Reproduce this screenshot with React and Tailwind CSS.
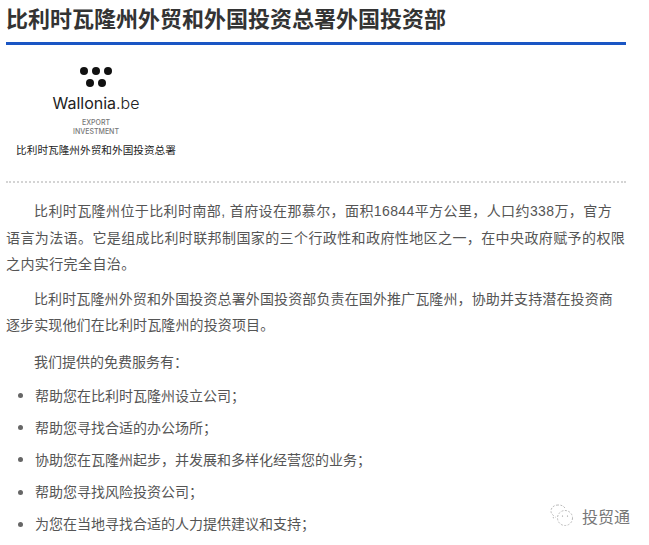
import { useState } from 'react'

const font = "font-['Liberation_Sans','Noto_Sans_CJK_SC',sans-serif]"

const services = [
  '帮助您在比利时瓦隆州设立公司；',
  '帮助您寻找合适的办公场所；',
  '协助您在瓦隆州起步，并发展和多样化经营您的业务；',
  '帮助您寻找风险投资公司；',
  '为您在当地寻找合适的人力提供建议和支持；',
]

function Logo() {
  return (
    <div className="w-[180px] h-[136px] pt-[21px] flex flex-col items-center">
      <svg width="36" height="24" viewBox="0 0 36 24">
        <circle cx="6" cy="5" r="4" fill="#111" />
        <circle cx="18" cy="5" r="4" fill="#111" />
        <circle cx="30" cy="5" r="4" fill="#111" />
        <circle cx="12" cy="17" r="4" fill="#111" />
        <circle cx="24" cy="17" r="4" fill="#111" />
      </svg>
      <div className="mt-[3px] text-[16px] leading-[20px] text-[#222] font-['Inter',sans-serif] font-normal">
        Wallonia<span className="font-light">.be</span>
      </div>
      <div className="mt-[5px] text-[7px] leading-[9px] text-center text-[#777] font-['Inter',sans-serif] font-medium">
        <div>EXPORT</div>
        <div>INVESTMENT</div>
      </div>
      <div className="mt-[7px] text-[10.67px] leading-[14px] whitespace-nowrap text-[#222] font-['Liberation_Serif','Noto_Sans_CJK_SC',serif]">
        比利时瓦隆州外贸和外国投资总署
      </div>
    </div>
  )
}

export default function App() {
  const [items] = useState(services)

  return (
    <div className={`relative w-[649px] h-[545px] overflow-hidden bg-white ${font}`}>
      <div className="w-[620px] ml-[6px] pt-[5px]">
        <h1 className="text-[22px] leading-[30px] font-bold text-[#333] whitespace-nowrap">
          比利时瓦隆州外贸和外国投资总署外国投资部
        </h1>
        <div className="mt-[7px] h-[3px] bg-[#1a56c4]" />
        <Logo />
        <div className="border-b-2 border-dotted border-[#d4d4d4]" />

        <div className="mt-[15px] text-[14px] leading-[26px] text-[#555]">
          <p className="indent-[28px] tracking-[0.4px] leading-[26.5px]">
            比利时瓦隆州位于比利时南部, 首府设在那慕尔，面积16844平方公里，人口约338万，官方语言为法语。它是组成比利时联邦制国家的三个行政性和政府性地区之一，在中央政府赋予的权限之内实行完全自治。
          </p>
          <p className="indent-[28px] mt-[8px] tracking-[0.12px]">
            比利时瓦隆州外贸和外国投资总署外国投资部负责在国外推广瓦隆州，协助并支持潜在投资商逐步实现他们在比利时瓦隆州的投资项目。
          </p>
          <p className="indent-[28px] mt-[11px]">我们提供的免费服务有：</p>
          <ul className="mt-[8px]">
            {items.map((text) => (
              <li key={text} className="flex items-center h-[26px] mb-[6.2px]">
                <span className="ml-[12px] w-[5px] h-[5px] rounded-full bg-[#666]" />
                <span className="ml-[12px]">{text}</span>
              </li>
            ))}
          </ul>
        </div>
      </div>

      {/* watermark */}
      <div className="absolute left-[549px] top-[503px] flex items-center gap-[7px] text-[#777] text-[16px] leading-[26px]">
        <svg width="26" height="26" viewBox="0 0 26 26" fill="none" stroke="#bbb" strokeWidth="1" strokeDasharray="2 1.5">
          <path d="M9 2c-4 0-7 2.500-7 6 0 2 1 3.500 3 5l-1 2 3-1" />
          <path d="M16 5c-2-2.500-4-3-7-3" />
          <circle cx="16" cy="15" r="7.500" />
          <circle cx="13.500" cy="13" r=".6" fill="#888" stroke="none" />
          <circle cx="18.500" cy="13" r=".6" fill="#888" stroke="none" />
        </svg>
        <span className="font-['Noto_Sans_CJK_SC',sans-serif]">投贸通</span>
      </div>
    </div>
  )
}
